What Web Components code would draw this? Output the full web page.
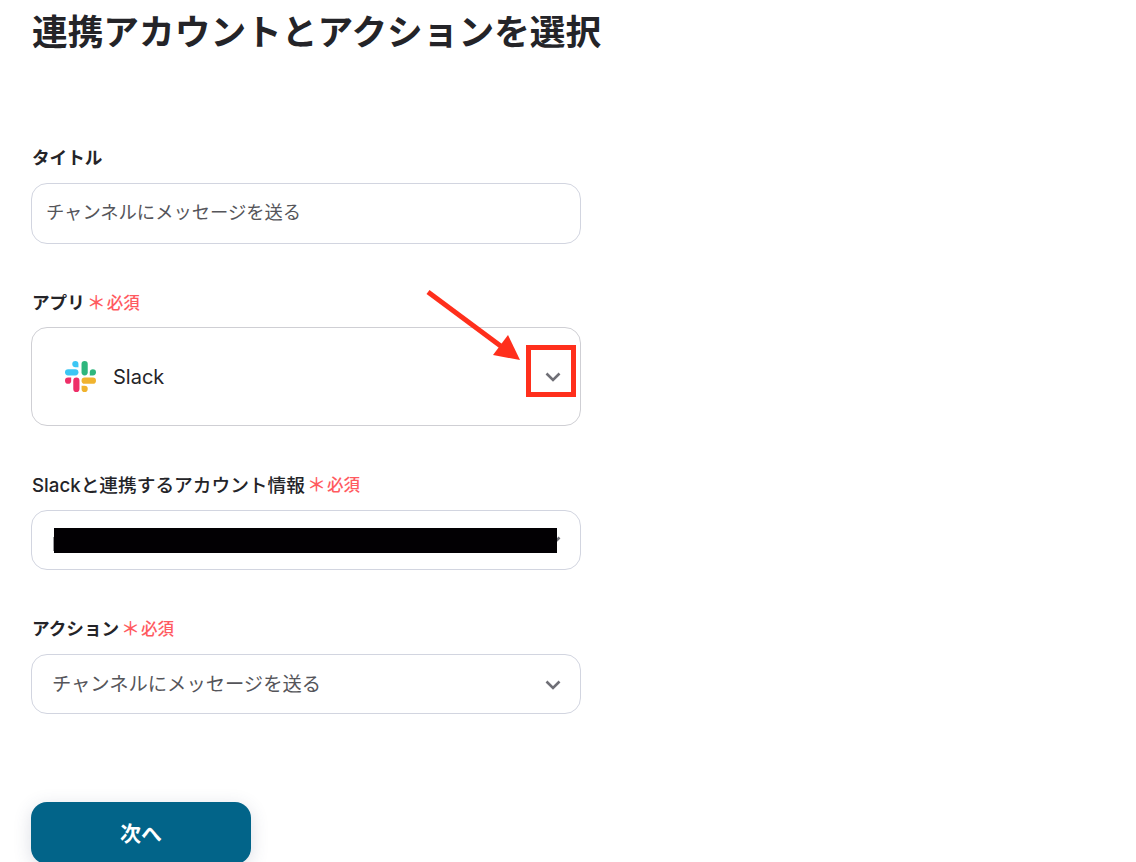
<!DOCTYPE html>
<html lang="ja">
<head>
<meta charset="utf-8">
<title>連携アカウントとアクションを選択</title>
<style>
  html, body { margin: 0; height: 862px; overflow: hidden; background: #fff; }
  body { font-family: Inter, "Noto Sans CJK JP", sans-serif; color: #242428; }
</style>
</head>
<body>
<setup-page>
  <form-field label="タイトル" style="--mt: 0px; --gap: 15px">
    <text-box value="チャンネルにメッセージを送る"></text-box>
  </form-field>
  <form-field label="アプリ" required style="--mt: 45px; --gap: 14px">
    <select-box tall>
      <slack-logo slot="icon"></slack-logo>
      Slack
      <red-callout slot="over"></red-callout>
    </select-box>
  </form-field>
  <form-field label="Slackと連携するアカウント情報" required style="--mt: 45px; --gap: 15px; --label-size: 18.7px; --label-weight: 500">
    <select-box>
      <span class="blackout"></span>
    </select-box>
  </form-field>
  <form-field label="アクション" required style="--mt: 45px; --gap: 15px">
    <select-box big>チャンネルにメッセージを送る</select-box>
  </form-field>
  <next-button>次へ</next-button>
</setup-page>

<script>
class SetupPage extends HTMLElement {
  constructor() {
    super();
    const shadowRoot = this.attachShadow({ mode: 'open' });
    shadowRoot.innerHTML = `
      <style>
      :host { display: block; padding-left: 31px; }
      h1 {
        margin: 0 0 88px;
        padding: 8px 0 0 1px;
        font-size: 35.7px;
        line-height: 48px;
        font-weight: 700;
        color: #242428;
      }
      </style>
      <h1>連携アカウントとアクションを選択</h1>
      <slot></slot>
    `
  }
}

class FormField extends HTMLElement {
  constructor() {
    super();
    const shadowRoot = this.attachShadow({ mode: 'open' });
    const mark = this.hasAttribute('required')
      ? `<span class="star">＊</span><span class="must">必須</span>` : '';
    shadowRoot.innerHTML = `
      <style>
      :host { display: block; width: 550px; margin-top: var(--mt, 0); }
      .label {
        display: flex;
        align-items: center;
        height: 24px;
        padding-left: 1px;
        margin-bottom: var(--gap, 14px);
        font-size: var(--label-size, 17.6px);
        font-weight: var(--label-weight, 700);
        color: #242428;
      }
      .star {
        margin-left: 2px;
        width: 19px;
        text-align: center;
        font-size: 19px;
        line-height: 24px;
        padding-top: 6px;
        font-weight: 500;
        color: #ff5a5f;
      }
      .must { margin-left: 1px; padding-top: 2px; font-size: 16.5px; font-weight: 500; color: #ff5a5f; }
      </style>
      <div class="label"><span>${this.getAttribute('label')}</span>${mark}</div>
      <slot></slot>
    `
  }
}

class TextBox extends HTMLElement {
  constructor() {
    super();
    const shadowRoot = this.attachShadow({ mode: 'open' });
    shadowRoot.innerHTML = `
      <style>
      :host {
        display: flex;
        align-items: center;
        box-sizing: border-box;
        height: 61px;
        padding: 0 14px 6px;
        border: 1px solid #d2d5e0;
        border-radius: 16px;
        font-size: 18.3px;
        color: #55555a;
      }
      </style>
      <span>${this.getAttribute('value')}</span>
    `
  }
}

class SelectBox extends HTMLElement {
  constructor() {
    super();
    const shadowRoot = this.attachShadow({ mode: 'open' });
    shadowRoot.innerHTML = `
      <style>
      :host {
        display: flex;
        align-items: center;
        position: relative;
        box-sizing: border-box;
        height: 60px;
        padding: 0 19px 0 20px;
        border: 1px solid #d2d5e0;
        border-radius: 16px;
        font-size: 17.5px;
        color: #55555a;
      }
      :host([big]) { font-size: 19.3px; }
      :host([big]) .value { padding-bottom: 2px; }
      :host([tall]) {
        height: 99px;
        padding-left: 33px;
        border-color: #cfcfd4;
        font-size: 20px;
        color: #242428;
      }
      .value { flex: 1; display: flex; align-items: center; }
      ::slotted(slack-logo) { margin-right: 17px; }
      ::slotted(.blackout) {
        position: absolute;
        left: 21px;
        top: 17px;
        width: 504px;
        height: 25px;
        background:
          linear-gradient(#020003, #020003) 1px 0 / 503px 100% no-repeat,
          linear-gradient(#9a9a9e, #9a9a9e) 0 9px / 1px 14px no-repeat;
      }
      svg { flex: none; width: 16px; height: 10px; margin-top: 1px; }
      </style>
      <slot name="icon"></slot>
      <span class="value"><slot></slot></span>
      <svg viewBox="0 0 16 10" fill="none" stroke="#6f6f76" stroke-width="2.6">
        <path d="M1.5 1.5 L8 8 L14.5 1.5"/>
      </svg>
      <slot name="over"></slot>
    `
  }
}

class SlackLogo extends HTMLElement {
  constructor() {
    super();
    const shadowRoot = this.attachShadow({ mode: 'open' });
    shadowRoot.innerHTML = `
      <style>
      :host { display: block; width: 31px; height: 31px; }
      svg { display: block; width: 31px; height: 31px; }
      </style>
      <svg viewBox="0 0 30 30">
        <g fill="#3cc6f4">
          <rect x="0" y="8" width="13" height="6" rx="3"/>
          <path d="M13 6V3a3 3 0 1 0-3 3z"/>
        </g>
        <g fill="#2eb67d">
          <rect x="16" y="0" width="6" height="14" rx="3"/>
          <path d="M24 14h3a3 3 0 1 0-3-3z"/>
        </g>
        <g fill="#f0b32e">
          <rect x="16" y="16" width="14" height="6" rx="3"/>
          <path d="M16 24v3a3 3 0 1 0 3-3z"/>
        </g>
        <g fill="#ee2f68">
          <rect x="8" y="16" width="6" height="14" rx="3"/>
          <path d="M6 16H3a3 3 0 1 0 3 3z"/>
        </g>
      </svg>
    `
  }
}

// arrow and square are drawn over the form, like a mark-up on the screenshot
class RedCallout extends HTMLElement {
  constructor() {
    super();
    const shadowRoot = this.attachShadow({ mode: 'open' });
    shadowRoot.innerHTML = `
      <style>
      :host { position: absolute; left: 388px; top: -43px; width: 160px; height: 115px; }
      svg { display: block; width: 160px; height: 115px; }
      </style>
      <svg viewBox="0 0 160 115">
        <rect x="108.5" y="62.5" width="45" height="47" fill="none" stroke="#ff2f1c" stroke-width="5"/>
        <path d="M8 7 L82 62" stroke="#ff2f1c" stroke-width="5" fill="none"/>
        <path d="M100 75 L73 70 L88 50 Z" fill="#ff2f1c"/>
      </svg>
    `
  }
}

class NextButton extends HTMLElement {
  constructor() {
    super();
    const shadowRoot = this.attachShadow({ mode: 'open' });
    shadowRoot.innerHTML = `
      <style>
      :host {
        display: flex;
        align-items: center;
        justify-content: center;
        box-sizing: border-box;
        width: 220px;
        height: 62px;
        padding-bottom: 3px;
        margin-top: 88px;
        border-radius: 16px;
        background: #026489;
        box-shadow: 0 4px 18px rgba(60, 70, 110, .18);
        font-size: 21px;
        font-weight: 700;
        color: #fff;
      }
      </style>
      <slot></slot>
    `
  }
}

customElements.define('setup-page', SetupPage);
customElements.define('form-field', FormField);
customElements.define('text-box', TextBox);
customElements.define('select-box', SelectBox);
customElements.define('slack-logo', SlackLogo);
customElements.define('red-callout', RedCallout);
customElements.define('next-button', NextButton);
</script>
</body>
</html>
